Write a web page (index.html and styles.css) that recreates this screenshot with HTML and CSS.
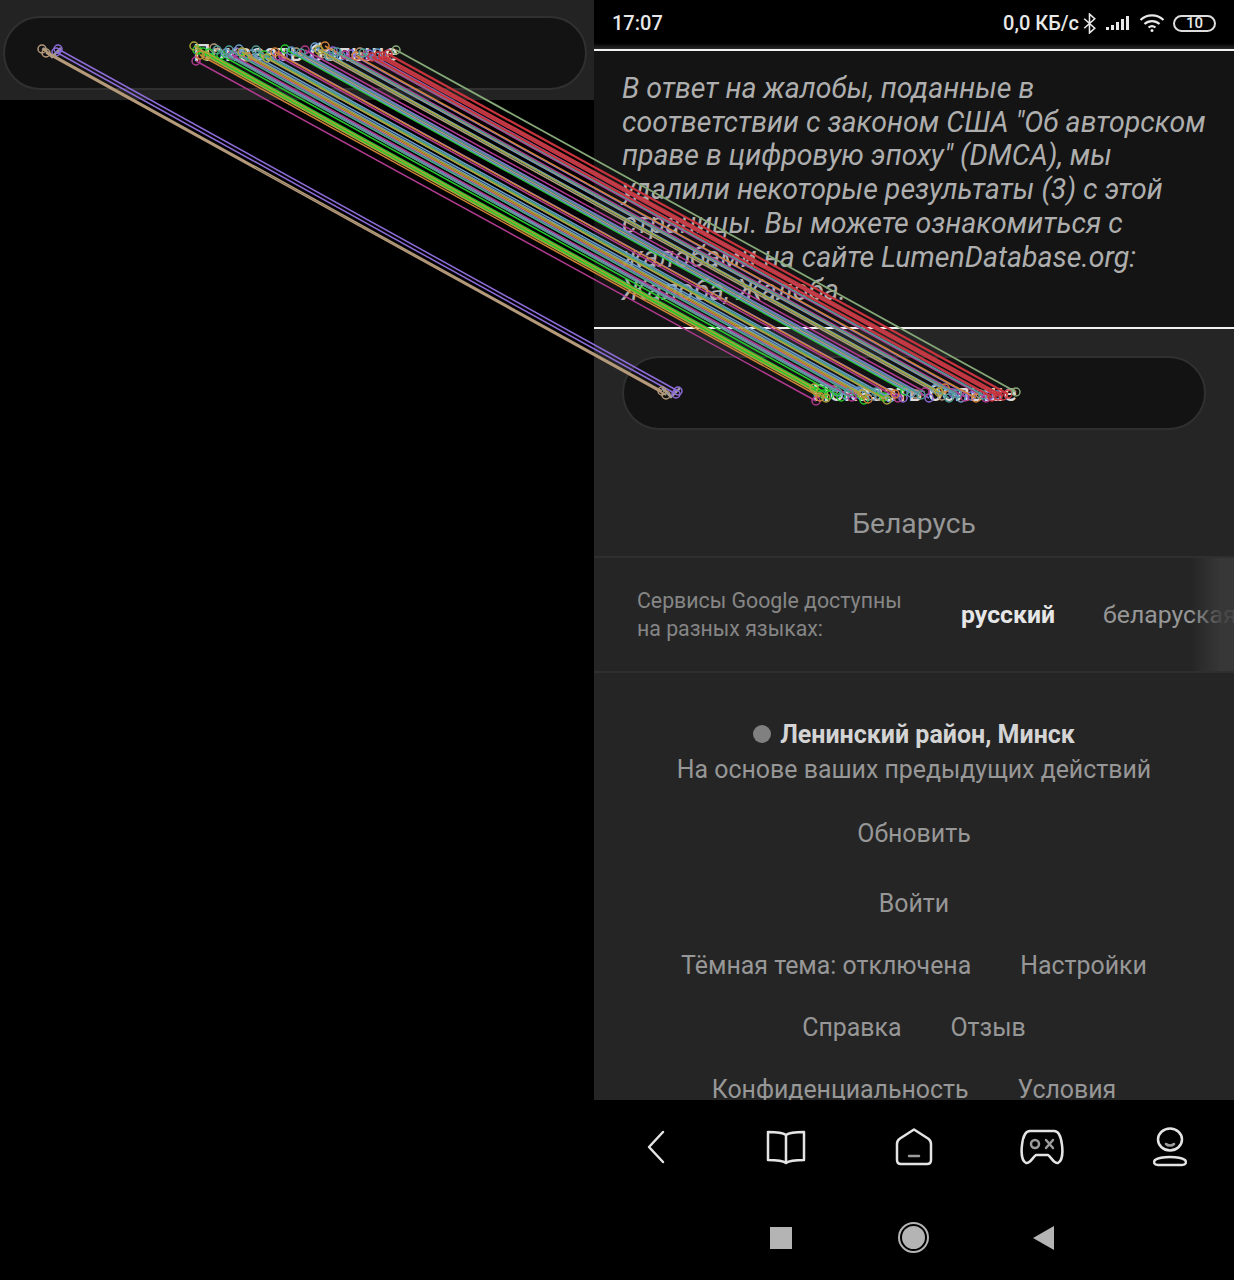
FILE: index.html
```html
<!DOCTYPE html>
<html lang="ru">
<head>
<meta charset="utf-8">
<title>Показать больше</title>
<link rel="stylesheet" href="styles.css">
</head>
<body>
<main class="stage">
  <section class="crop">
    <div class="crop-band">
      <button class="more">
        <svg class="more-icon" viewBox="0 0 24 16"><path d="M3 3l9 9 9-9"/></svg>
        <span class="more-label">Показать больше</span>
      </button>
    </div>
  </section>

  <section class="phone">
    <header class="status">
      <span class="clock">17:07</span>
      <div class="status-right">
        <span class="speed">0,0 КБ/с</span>
        <svg class="st-bt" viewBox="0 0 12 20"><path d="M1 5.500l10 9-5 4.500V1l5 4.500-10 9"/></svg>
        <svg class="st-signal" viewBox="0 0 24 14"><path d="M0 11v3h3v-3zM5 9v5h3V9zM10 6v8h3V6zM15 3v11h3V3zM20 0v14h3V0z"/></svg>
        <svg class="st-wifi" viewBox="0 0 26 18"><path class="wifi-arc" d="M1.500 6a16.500 16.500 0 0 1 23 0M5.500 10a11 11 0 0 1 15 0M9.500 13.500a5.500 5.500 0 0 1 7 0"/><circle cx="13" cy="16.500" r="1.500"/></svg>
        <div class="battery"><span>10</span></div>
      </div>
    </header>

    <div class="rule"></div>
    <p class="notice">В ответ на жалобы, поданные в соответствии с законом США "Об авторском праве в цифровую эпоху" (DMCA), мы удалили некоторые результаты (3) с этой страницы. Вы можете ознакомиться с жалобами на сайте LumenDatabase.org: Жалоба, Жалоба.</p>
    <div class="rule"></div>

    <div class="page">
      <div class="page-more">
        <button class="more">
          <svg class="more-icon" viewBox="0 0 24 16"><path d="M3 3l9 9 9-9"/></svg>
          <span class="more-label">Показать больше</span>
        </button>
      </div>
      <div class="country">Беларусь</div>
      <div class="langs">
        <p class="langs-note">Сервисы Google доступны<br>на разных языках:</p>
        <span class="lang lang-on">русский</span>
        <span class="lang">беларуская</span>
        <div class="langs-fade"></div>
      </div>
      <div class="place">
        <div class="place-name"><i class="dot"></i><b>Ленинский район, Минск</b></div>
        <div class="place-note">На основе ваших предыдущих действий</div>
      </div>
      <div class="links link-refresh"><span>Обновить</span></div>
      <div class="links link-login"><span>Войти</span></div>
      <div class="links link-row"><span>Тёмная тема: отключена</span><span>Настройки</span></div>
      <div class="links link-row"><span>Справка</span><span>Отзыв</span></div>
      <div class="links link-row"><span>Конфиденциальность</span><span>Условия</span></div>
    </div>

    <nav class="browser-nav">
      <svg class="nav-icon" viewBox="0 0 44 40"><path d="M27 5L13 20l14 15"/></svg>
      <svg class="nav-icon" viewBox="0 0 44 40"><path d="M22 8c-4-3-11-3-18-3v28c7 0 14 0 18 3 4-3 11-3 18-3V5c-7 0-14 0-18 3zv28"/></svg>
      <svg class="nav-icon" viewBox="0 0 44 40"><path d="M22 2.500L8 11.500Q5 13.500 5 17V33q0 4 4 4h26q4 0 4-4V17q0-3.500-3-5.500z"/><path class="nav-dim" d="M17 29h10"/></svg>
      <svg class="nav-icon" viewBox="0 0 44 40"><path d="M10 4h24c4 0 7 5 8 14 1 8 0 16-4 18-4 1-7-6-10-8H16c-3 2-6 9-10 8-4-2-5-10-4-18C3 9 6 4 10 4z"/><circle class="nav-dim" cx="15" cy="17" r="4"/><path class="nav-dim" d="M26 13l7 8M33 13l-7 8"/></svg>
      <svg class="nav-icon" viewBox="0 0 44 40"><ellipse cx="22" cy="12.500" rx="12" ry="11"/><path class="nav-dim" d="M18 17c2 2 6 2 8 0"/><path d="M10 38c-4 0-5-3-3-5 3-2 9-3 15-3s12 1 15 3c2 2 1 5-3 5z"/></svg>
    </nav>

    <nav class="system-nav">
      <i class="sys-square"></i>
      <i class="sys-home"><i class="sys-home-fill"></i></i>
      <svg class="sys-back" viewBox="0 0 22 24"><path d="M21 0v24L0 12z"/></svg>
    </nav>
  </section>

  <svg class="matches" viewBox="0 0 1234 1280">
    <defs>
      <marker id="kp" markerUnits="userSpaceOnUse" markerWidth="12" markerHeight="12" refX="6" refY="6">
        <circle cx="6" cy="6" r="4" fill="none" stroke="context-stroke" stroke-width="1.500"/>
      </marker>
    </defs>
    <path class="m m-purple" d="M58 49l620 342M56 52l620 342M236 52l620 342M283 56l620 342M309 56l620 342M333 51l620 342M351 54l620 342M369 54l620 342"/>
    <path class="m m-tan" d="M42 49l620 342M46 53l620 342M214 48l620 342M259 54l620 342M296 52l620 342M322 54l620 342M360 52l620 342"/>
    <path class="m m-green" d="M197 50l620 342M203 52l620 342M209 53l620 342M221 55l620 342M244 58l620 342M264 55l620 342M285 49l620 342"/>
    <path class="m m-blue" d="M226 53l620 342M239 49l620 342M252 54l620 342M270 56l620 342M291 51l620 342M315 47l620 342M341 56l620 342M377 53l620 342"/>
    <path class="m m-magenta" d="M196 61l620 340M232 55l620 342M278 56l620 342M305 50l620 342M345 55l620 342M366 56l620 342"/>
    <path class="m m-orange" d="M200 55l620 342M248 57l620 342M275 52l620 342M325 46l620 342M356 56l620 342"/>
    <path class="m m-teal" d="M217 50l620 342M229 50l620 342M256 50l620 342M301 53l620 342M329 56l620 342M337 52l620 342M363 53l620 342"/>
    <path class="m m-olive" d="M194 46l620 342M206 56l620 342M242 52l620 342M267 58l620 342M319 50l620 342"/>
    <path class="m m-red" d="M372 57l620 340M378 56l620 340M383 56l620 340M388 54l620 340"/>
    <path class="m m-sage" d="M396 50l620 342"/>
  </svg>
</main>
</body>
</html>
```
FILE: styles.css
```css
* { box-sizing: border-box; }
html, body { margin: 0; background: #000; }
body { font-family: Roboto, "Noto Sans", sans-serif; }

.stage { position: relative; display: flex; width: 1234px; height: 1280px; overflow: hidden; background: #000; }

.crop { width: 594px; flex: none; }
.crop-band { height: 100px; padding: 16px 7px 10px 3px; background: #232323; }

.more {
  display: grid;
  grid-template-columns: 1fr auto 1fr;
  align-items: center;
  justify-items: start;
  width: 100%;
  height: 74px;
  padding: 0 0 0 35px;
  font: inherit;
  background: #131313;
  border: 2px solid #303030;
  border-radius: 37px;
}
.more-icon { width: 24px; height: 16px; fill: none; stroke: #9a9a9a; stroke-width: 2.500; }
.more-label { font-size: 24.600px; font-weight: 500; color: #dadada; white-space: nowrap; transform: translate(-17px, -1px); }

.phone { display: flex; flex-direction: column; width: 640px; flex: none; height: 1280px; }

.status { display: flex; justify-content: space-between; align-items: center; height: 49px; padding: 0 18px 3px; color: #e8e8e8; background: linear-gradient(#000 88%, #2a2a2a); }
.clock { font-size: 20px; font-weight: 500; }
.status-right { display: flex; align-items: center; }
.speed { font-size: 20px; font-weight: 500; }
.st-bt { width: 13px; height: 21px; margin-left: 4px; fill: none; stroke: #e8e8e8; stroke-width: 1.500; }
.st-signal { width: 24px; height: 14px; margin-left: 10px; fill: #e8e8e8; }
.st-wifi { width: 26px; height: 18px; margin-left: 9px; fill: #e8e8e8; }
.wifi-arc { fill: none; stroke: #e8e8e8; stroke-width: 2.200; }
.battery { display: flex; align-items: center; justify-content: center; width: 43px; height: 17px; margin-left: 8px; color: #e8e8e8; font-size: 15px; font-weight: 500; border: 2px solid #ddd; border-radius: 9px; }

.rule { height: 2px; flex: none; background: #f2f2f2; }
.notice { height: 276px; margin: 0; padding: 21px 28px 0; font-size: 28.500px; font-style: italic; line-height: 33.700px; color: #aeaeae; background: #141414; }

.page { height: 771px; flex: none; overflow: hidden; background: #252525; }
.page-more { padding: 27px 28px 0; }
.country { padding-top: 74px; height: 128px; font-size: 28.300px; line-height: 40px; text-align: center; color: #979797; border-bottom: 2px solid #2f2f2f; }

.langs { position: relative; display: flex; align-items: center; height: 115px; padding-left: 43px; overflow: hidden; white-space: nowrap; border-bottom: 2px solid #2f2f2f; }
.langs-note { flex: none; width: 324px; margin: 0; font-size: 21.300px; line-height: 28px; color: #868686; }
.lang { flex: none; margin-right: 48px; font-size: 24.800px; color: #979797; }
.lang-on { font-weight: 700; color: #e6e6e6; }
.langs-fade { position: absolute; top: 0; right: 0; bottom: 0; width: 44px; background: linear-gradient(to right, rgba(58,58,58,0), rgba(58,58,58,.85) 70%); }

.place { padding-top: 43px; text-align: center; }
.place-name { display: flex; justify-content: center; align-items: center; height: 36px; font-size: 25px; color: #d4d4d4; }
.dot { width: 18px; height: 18px; margin-right: 9px; border-radius: 50%; background: #808080; }
.place-note { height: 36px; font-size: 24.900px; line-height: 36px; color: #979797; }

.links { display: flex; justify-content: center; gap: 49px; font-size: 24.900px; line-height: 34px; color: #979797; white-space: nowrap; }
.link-refresh { margin-top: 29px; }
.link-login { margin-top: 36px; }
.link-row { margin-top: 28px; }

.browser-nav { display: grid; grid-template-columns: repeat(5, 1fr); justify-items: center; align-items: center; height: 96px; flex: none; padding-bottom: 2px; background: #000; }
.nav-icon { width: 44px; height: 40px; fill: none; stroke: #e4e4e4; stroke-width: 2.500; stroke-linejoin: round; stroke-linecap: round; }
.nav-dim { stroke: #9c9c9c; }

.system-nav { display: flex; justify-content: center; align-items: center; gap: 106px; flex: 1; padding: 0 4px 1px 0; background: #000; }
.sys-square { width: 22px; height: 22px; background: #b4b4b4; }
.sys-home { display: flex; align-items: center; justify-content: center; width: 31px; height: 31px; border: 2px solid #b4b4b4; border-radius: 50%; }
.sys-home-fill { width: 23px; height: 23px; border-radius: 50%; background: #b4b4b4; }
.sys-back { width: 22px; height: 24px; fill: #b4b4b4; margin-left: -2px; }

.matches { position: absolute; inset: 0; width: 1234px; height: 1280px; pointer-events: none; }
.m { fill: none; stroke-width: 1.500; marker-start: url(#kp); marker-mid: url(#kp); marker-end: url(#kp); }
.m-purple { stroke: #8d6cd8; }
.m-tan { stroke: #b49a7a; }
.m-green { stroke: #25c92c; }
.m-blue { stroke: #6b9cc8; }
.m-magenta { stroke: #b13a8f; }
.m-orange { stroke: #d0813a; }
.m-teal { stroke: #4f9a96; }
.m-olive { stroke: #a9a43a; }
.m-red { stroke: #c8353f; stroke-width: 2.200; }
.m-sage { stroke: #86a878; stroke-width: 1.800; }
```
